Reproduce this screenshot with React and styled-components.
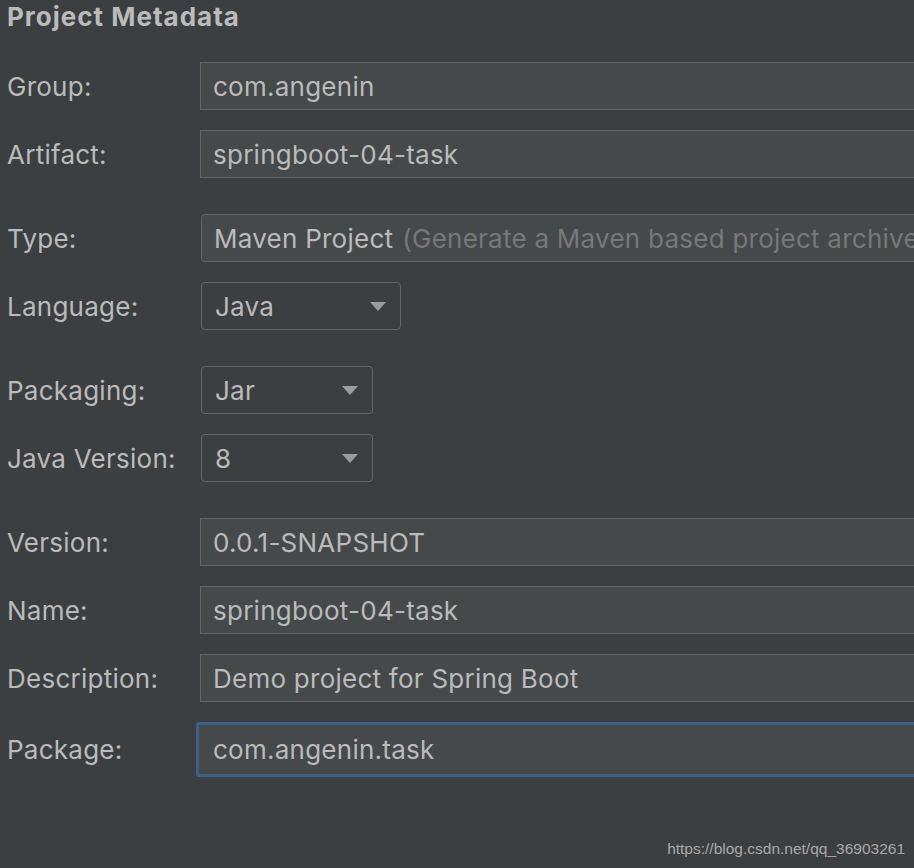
import React from 'react';
import styled, { createGlobalStyle } from 'styled-components';

const Global = createGlobalStyle`
  html, body {
    margin: 0;
    padding: 0;
    background: #3c3f41;
    overflow: hidden;
  }
`

const Page = styled.div`
  position: relative;
  width: 914px;
  height: 868px;
  overflow: hidden;
  background: #3c3f41;
  color: #bbbbbb;
  font-family: Inter, "Open Sans", sans-serif;
  font-size: 26px;
  letter-spacing: 0.25px;
`
const Title = styled.h1`
  margin: 0;
  padding: 1px 0 0 7px;
  height: 39px;
  font-size: 26px;
  font-weight: 700;
  letter-spacing: 1px;
  line-height: 32px;
  color: #bbbbbb;
`
const Form = styled.div`
  display: flex;
  flex-direction: column;
  padding-top: 22px;
`
const Group = styled.div`
  display: flex;
  flex-direction: column;
  gap: 20px;
  margin-bottom: 36px;
`
const Row = styled.div`
  display: grid;
  grid-template-columns: 193px 1fr;
  align-items: center;
  padding-left: 7px;
  height: 48px;
`
const Label = styled.div`
  white-space: nowrap;
`
const Field = styled.div`
  box-sizing: border-box;
  height: 48px;
  width: 900px;
  display: flex;
  align-items: center;
  padding-left: 12px;
  background: #45494a;
  border: 1px solid #646464;
  border-radius: ${p => (p.$rounded ? '4px' : '0')};
  white-space: nowrap;
  ${p => p.$focused && `
    margin-left: -4px;
    height: 55px;
    padding-left: 14px;
    border: 3px solid #3d6185;
    border-radius: 3px;
  `}
`
const Hint = styled.span`
  color: #787878;
  margin-left: 9px;
`
const Select = styled.div`
  box-sizing: border-box;
  height: 48px;
  width: ${p => p.$w}px;
  margin-left: 1px;
  display: flex;
  align-items: center;
  justify-content: space-between;
  padding: 0 14px 0 13px;
  border: 1px solid #646464;
  border-radius: 4px;
  background: #3c3f41;
`
const Arrow = styled.span`
  width: 0;
  height: 0;
  border-left: 8px solid transparent;
  border-right: 8px solid transparent;
  border-top: 9px solid #9a9da1;
`
const Watermark = styled.div`
  position: absolute;
  right: 9px;
  bottom: 10px;
  font-family: "Liberation Sans", Arial, sans-serif;
  font-size: 15.5px;
  letter-spacing: 0;
  color: #a9a9a9;
`

function TextRow({ label, value, focused }) {
  return (
    <Row>
      <Label>{label}</Label>
      <Field $focused={focused}>{value}</Field>
    </Row>
  )
}

function SelectRow({ label, value, w }) {
  return (
    <Row>
      <Label>{label}</Label>
      <div>
        <Select $w={w}>
          <span>{value}</span>
          <Arrow />
        </Select>
      </div>
    </Row>
  )
}

export default function App() {
  return (
    <Page>
      <Global />
      <Title>Project Metadata</Title>
      <Form>
        <Group>
          <TextRow label="Group:" value="com.angenin" />
          <TextRow label="Artifact:" value="springboot-04-task" />
        </Group>
        <Group>
          <Row>
            <Label>Type:</Label>
            <Field $rounded style={{ marginLeft: 1 }}>
              Maven Project<Hint>(Generate a Maven based project archive)</Hint>
            </Field>
          </Row>
          <SelectRow label="Language:" value="Java" w={200} />
        </Group>
        <Group>
          <SelectRow label="Packaging:" value="Jar" w={172} />
          <SelectRow label="Java Version:" value="8" w={172} />
        </Group>
        <Group>
          <TextRow label="Version:" value="0.0.1-SNAPSHOT" />
          <TextRow label="Name:" value="springboot-04-task" />
          <TextRow label="Description:" value="Demo project for Spring Boot" />
          <TextRow label="Package:" value="com.angenin.task" focused />
        </Group>
      </Form>
      <Watermark>https://blog.csdn.net/qq_36903261</Watermark>
    </Page>
  )
}
